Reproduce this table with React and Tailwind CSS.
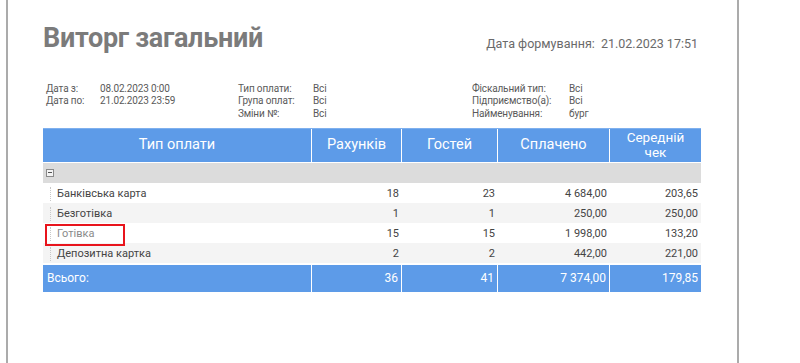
import React from "react";

const rows = [
  { name: "Банківська карта", checks: "18", guests: "23", paid: "4 684,00", avg: "203,65" },
  { name: "Безготівка", checks: "1", guests: "1", paid: "250,00", avg: "250,00" },
  { name: "Готівка", checks: "15", guests: "15", paid: "1 998,00", avg: "133,20", muted: true },
  { name: "Депозитна картка", checks: "2", guests: "2", paid: "442,00", avg: "221,00" },
];

const cols = "grid grid-cols-[269px_90px_96px_112px_91px]";

const Param = ({ label, value, w }) => (
  <div className="flex h-[12.5px] items-center">
    <span className={`${w} shrink-0`}>{label}</span>
    <span>{value}</span>
  </div>
);

const App = () => {
  return (
    <div
      className="w-[800px] h-[363px] bg-white overflow-hidden"
      style={{ fontFamily: "Roboto, 'Liberation Sans', sans-serif" }}
    >
      <div className="ml-[6px] w-[733px] h-full border-x-2 border-[#ababab] pl-[35px] relative">
        {/* title line */}
        <div className="w-[658px] flex justify-between items-end pt-[22px]">
          <h1 className="text-[27px] leading-[33px] font-bold text-[#7b7b7b] tracking-[-0.3px]">
            Виторг загальний
          </h1>
          <div className="text-[12.5px] text-[#6a6a6a] pr-[3px] pb-[1px]">
            Дата формування:&nbsp; 21.02.2023 17:51
          </div>
        </div>

        {/* params */}
        <div className="flex mt-[27px] text-[10px] text-[#5a5a5a] tracking-[-0.15px]">
          <div className="w-[195px] pl-[3px]">
            <Param label="Дата з:" value="08.02.2023 0:00" w="w-[54px]" />
            <Param label="Дата по:" value="21.02.2023 23:59" w="w-[54px]" />
          </div>
          <div className="w-[234px]">
            <Param label="Тип оплати:" value="Всі" w="w-[75px]" />
            <Param label="Група оплат:" value="Всі" w="w-[75px]" />
            <Param label="Зміни №:" value="Всі" w="w-[75px]" />
          </div>
          <div>
            <Param label="Фіскальний тип:" value="Всі" w="w-[97px]" />
            <Param label="Підприємство(а):" value="Всі" w="w-[97px]" />
            <Param label="Найменування:" value="бург" w="w-[97px]" />
          </div>
        </div>

        {/* table */}
        <div className="w-[658px] mt-[8px] text-[11px] text-[#444]">
          <div className={`${cols} h-[34px] bg-[#5d9be8] text-white text-[14.5px] border-t border-[#7fb0ee]`}>
            <div className="flex items-center justify-center border-r border-white">Тип оплати</div>
            <div className="flex items-center justify-center border-r border-white">Рахунків</div>
            <div className="flex items-center justify-center border-r border-white">Гостей</div>
            <div className="flex items-center justify-center border-r border-white">Сплачено</div>
            <div className="flex flex-col items-center justify-center text-center text-[13.5px] leading-[15px]">
              <span>Середній</span>
              <span>чек</span>
            </div>
          </div>

          <div className="h-[20px] mt-[1px] bg-[#dcdcdc] flex items-center pl-[3px]">
            <div className="w-[8px] h-[8px] border border-[#8a8a8a] bg-[#f4f4f4] flex items-center justify-center">
              <div className="w-[4px] h-px bg-[#555]" />
            </div>
          </div>

          {rows.map((r, i) => (
            <div
              key={i}
              className={`${cols} h-[20px] items-center pt-[3px] ${i % 2 ? "bg-[#f4f4f4]" : "bg-white"}`}
            >
              <div className="flex items-center h-full pl-[7px] -mt-[3px] pt-[3px]">
                <span className="h-full border-l border-dotted border-[#c8c8c8]" />
                <span className={`pl-[6px] ${r.muted ? "text-[#8a8a8a]" : ""}`}>{r.name}</span>
              </div>
              <div className="text-right pr-[3px]">{r.checks}</div>
              <div className="text-right pr-[3px]">{r.guests}</div>
              <div className="text-right pr-[3px]">{r.paid}</div>
              <div className="text-right pr-[3px]">{r.avg}</div>
            </div>
          ))}

          <div className={`${cols} h-[27px] mt-[2px] bg-[#5d9be8] text-white text-[12px] items-stretch`}>
            <div className="flex items-center pl-[4px] border-r border-white">Всього:</div>
            <div className="flex items-center justify-end pr-[3px] border-r border-white">36</div>
            <div className="flex items-center justify-end pr-[3px] border-r border-white">41</div>
            <div className="flex items-center justify-end pr-[3px] border-r border-white">7 374,00</div>
            <div className="flex items-center justify-end pr-[3px]">179,85</div>
          </div>
        </div>

        {/* highlight marker */}
        <div className="absolute left-[37px] top-[224px] w-[80px] h-[22px] border-2 border-[#e8141c]" />
      </div>
    </div>
  );
};

export default App;
